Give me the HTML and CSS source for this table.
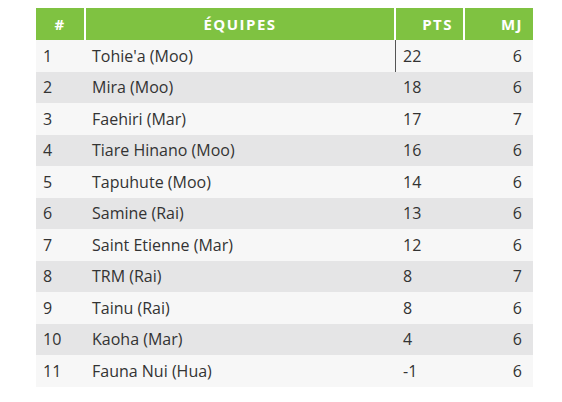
FILE: index.html
```html
<!DOCTYPE html>
<html lang="fr">
<head>
<meta charset="utf-8">
<title>Classement</title>
<link rel="stylesheet" href="styles.css">
</head>
<body>
<table class="standings">
  <colgroup>
    <col class="w-rank">
    <col class="w-team">
    <col class="w-pts">
    <col class="w-mj">
  </colgroup>
  <thead>
    <tr>
      <th class="c-rank">#</th>
      <th class="c-team">ÉQUIPES</th>
      <th class="c-pts">PTS</th>
      <th class="c-mj">MJ</th>
    </tr>
  </thead>
  <tbody>
    <tr><td class="c-rank">1</td><td class="c-team">Tohie'a (Moo)</td><td class="c-pts cursor">22</td><td class="c-mj">6</td></tr>
    <tr><td class="c-rank">2</td><td class="c-team">Mira (Moo)</td><td class="c-pts">18</td><td class="c-mj">6</td></tr>
    <tr><td class="c-rank">3</td><td class="c-team">Faehiri (Mar)</td><td class="c-pts">17</td><td class="c-mj">7</td></tr>
    <tr><td class="c-rank">4</td><td class="c-team">Tiare Hinano (Moo)</td><td class="c-pts">16</td><td class="c-mj">6</td></tr>
    <tr><td class="c-rank">5</td><td class="c-team">Tapuhute (Moo)</td><td class="c-pts">14</td><td class="c-mj">6</td></tr>
    <tr><td class="c-rank">6</td><td class="c-team">Samine (Rai)</td><td class="c-pts">13</td><td class="c-mj">6</td></tr>
    <tr><td class="c-rank">7</td><td class="c-team">Saint Etienne (Mar)</td><td class="c-pts">12</td><td class="c-mj">6</td></tr>
    <tr><td class="c-rank">8</td><td class="c-team">TRM (Rai)</td><td class="c-pts">8</td><td class="c-mj">7</td></tr>
    <tr><td class="c-rank">9</td><td class="c-team">Tainu (Rai)</td><td class="c-pts">8</td><td class="c-mj">6</td></tr>
    <tr><td class="c-rank">10</td><td class="c-team">Kaoha (Mar)</td><td class="c-pts">4</td><td class="c-mj">6</td></tr>
    <tr><td class="c-rank">11</td><td class="c-team">Fauna Nui (Hua)</td><td class="c-pts">-1</td><td class="c-mj">6</td></tr>
  </tbody>
</table>
</body>
</html>
```
FILE: styles.css
```css
html, body {
  margin: 0;
  padding: 0;
  background: #ffffff;
}
body {
  padding: 8px 0 0 36px;
  font-family: "Open Sans", Lato, sans-serif;
  color: #333333;
}
.standings {
  width: 497px;
  border-collapse: collapse;
  table-layout: fixed;
}
.w-rank { width: 49px; }
.w-team { width: 310px; }
.w-pts { width: 69px; }
.w-mj { width: 69px; }
.standings th,
.standings td {
  box-sizing: border-box;
  overflow: hidden;
  white-space: nowrap;
}
.standings th {
  background: #7fc241;
  color: #ffffff;
  font-weight: 700;
  font-size: 15px;
  letter-spacing: 1.5px;
  height: 32px;
  padding: 0 10px;
  border-left: 2px solid #ffffff;
}
.standings th:first-child {
  border-left: none;
}
.standings td {
  font-size: 16px;
  height: 31.5px;
  padding: 0 7px;
}
.standings tbody tr:nth-child(odd) td {
  background: #f7f7f7;
}
.standings tbody tr:nth-child(even) td {
  background: #e5e5e6;
}
th.c-rank, th.c-team { text-align: center; }
th.c-pts, th.c-mj { text-align: right; }
td.c-rank, td.c-team, td.c-pts { text-align: left; }
td.c-pts { padding-left: 8px; }
td.c-mj { text-align: right; padding-right: 11px; }
td.cursor {
  box-shadow: inset 1px 0 0 #555555;
}
```
